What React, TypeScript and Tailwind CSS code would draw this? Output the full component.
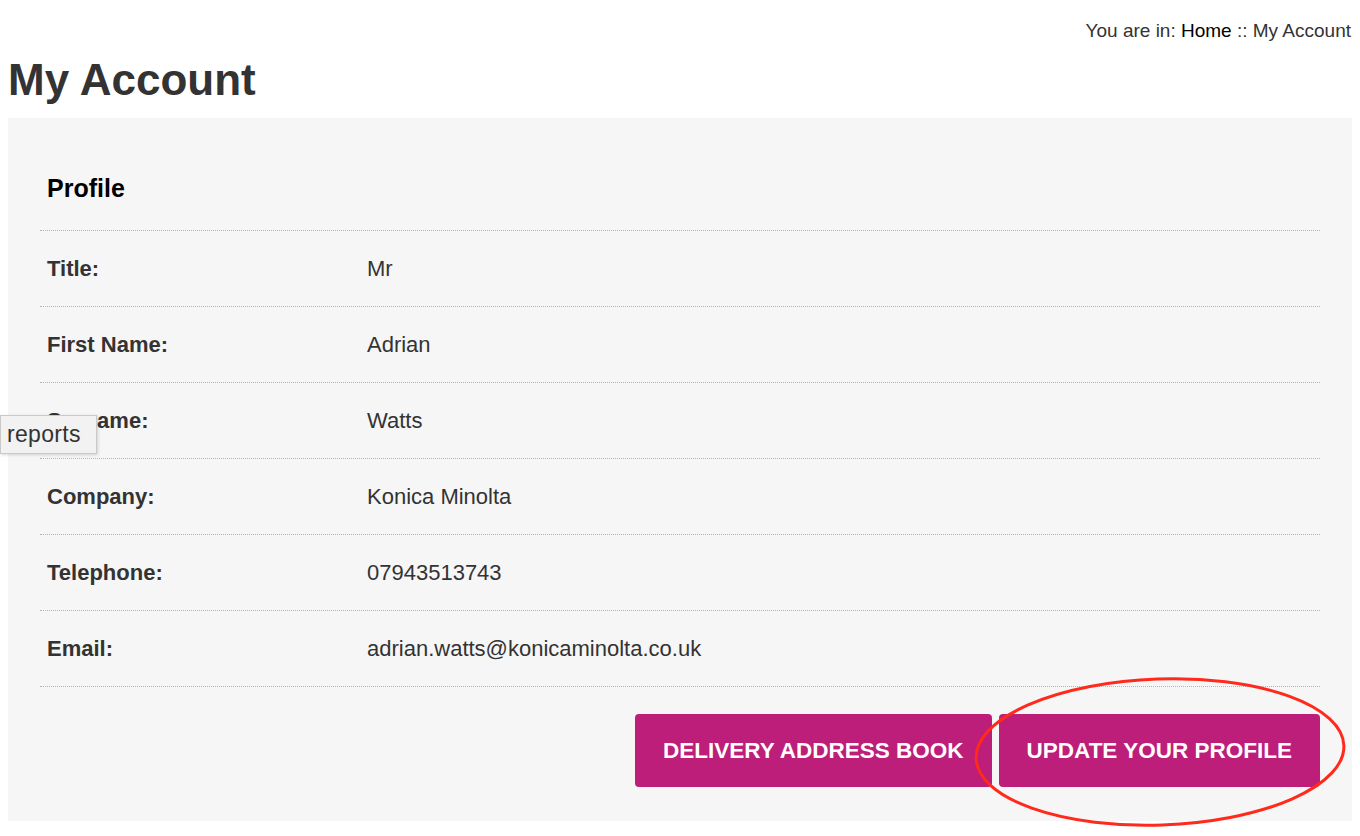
import React from "react";

// ---------------------------------------------------------------------------
// Data
// ---------------------------------------------------------------------------

const PROFILE_ROWS: { label: string; value: string }[] = [
  { label: "Title:", value: "Mr" },
  { label: "First Name:", value: "Adrian" },
  { label: "Surname:", value: "Watts" },
  { label: "Company:", value: "Konica Minolta" },
  { label: "Telephone:", value: "07943513743" },
  { label: "Email:", value: "adrian.watts@konicaminolta.co.uk" },
];

const FONT = "font-['Liberation_Sans',Arial,Helvetica,sans-serif]";

// ---------------------------------------------------------------------------
// Pieces
// ---------------------------------------------------------------------------

function Breadcrumb() {
  return (
    <div className="flex justify-end pt-[19px] pr-[9px] text-[19px] leading-[24px] text-[#333]">
      <span>
        You are in: <a className="text-black">Home</a> :: My Account
      </span>
    </div>
  );
}

function ProfileTable() {
  return (
    <div className="border-b border-dotted border-[#b5b5b5]">
      {PROFILE_ROWS.map((row) => (
        <div
          key={row.label}
          className="flex h-[76px] items-center border-t border-dotted border-[#b5b5b5] text-[22px] text-[#333]"
        >
          <div className="w-[320px] pl-[7px] font-bold">{row.label}</div>
          <div className="pl-[7px]">{row.value}</div>
        </div>
      ))}
    </div>
  );
}

function ActionButton({ children }: { children: React.ReactNode }) {
  return (
    <button className="flex h-[73px] items-center rounded-[4px] bg-[#bd1e79] px-7 text-[22.5px] font-bold text-white">
      {children}
    </button>
  );
}

// ---------------------------------------------------------------------------
// Page
// ---------------------------------------------------------------------------

export default function App() {
  return (
    <div className={`relative min-h-[836px] w-[1360px] bg-white ${FONT}`}>
      <Breadcrumb />

      <h1 className="mt-[11px] pl-[8px] text-[44px] font-bold leading-[52px] text-[#333]">
        My Account
      </h1>

      <section className="mx-[8px] mt-[12px] bg-[#f6f6f6] px-8 pt-[52px] pb-[34px]">
        <h2 className="pl-[7px] text-[25px] font-bold leading-[36px] text-black">
          Profile
        </h2>
        <div className="mt-[24px]">
          <ProfileTable />
        </div>
        <div className="mt-[27px] flex justify-end gap-[7px]">
          <ActionButton>DELIVERY ADDRESS BOOK</ActionButton>
          <ActionButton>UPDATE YOUR PROFILE</ActionButton>
        </div>
      </section>

      {/* Hover tooltip left over the Surname label */}
      <div className="absolute left-0 top-[415px] flex h-[39px] w-[97px] items-center border border-[#c9c9c9] bg-[#f2f2f2] pl-[6px] text-[23px] tracking-[0.3px] text-[#333] shadow-[1px_1px_3px_rgba(0,0,0,0.15)]">
        reports
      </div>

      {/* Red annotation ring around the update button */}
      <svg
        className="pointer-events-none absolute left-0 top-0"
        width="1360"
        height="836"
        aria-hidden
      >
        <ellipse
          cx="1160"
          cy="752"
          rx="184"
          ry="73"
          transform="rotate(-2 1160 752)"
          fill="none"
          stroke="#ff2a1c"
          strokeWidth="3"
        />
      </svg>
    </div>
  );
}
